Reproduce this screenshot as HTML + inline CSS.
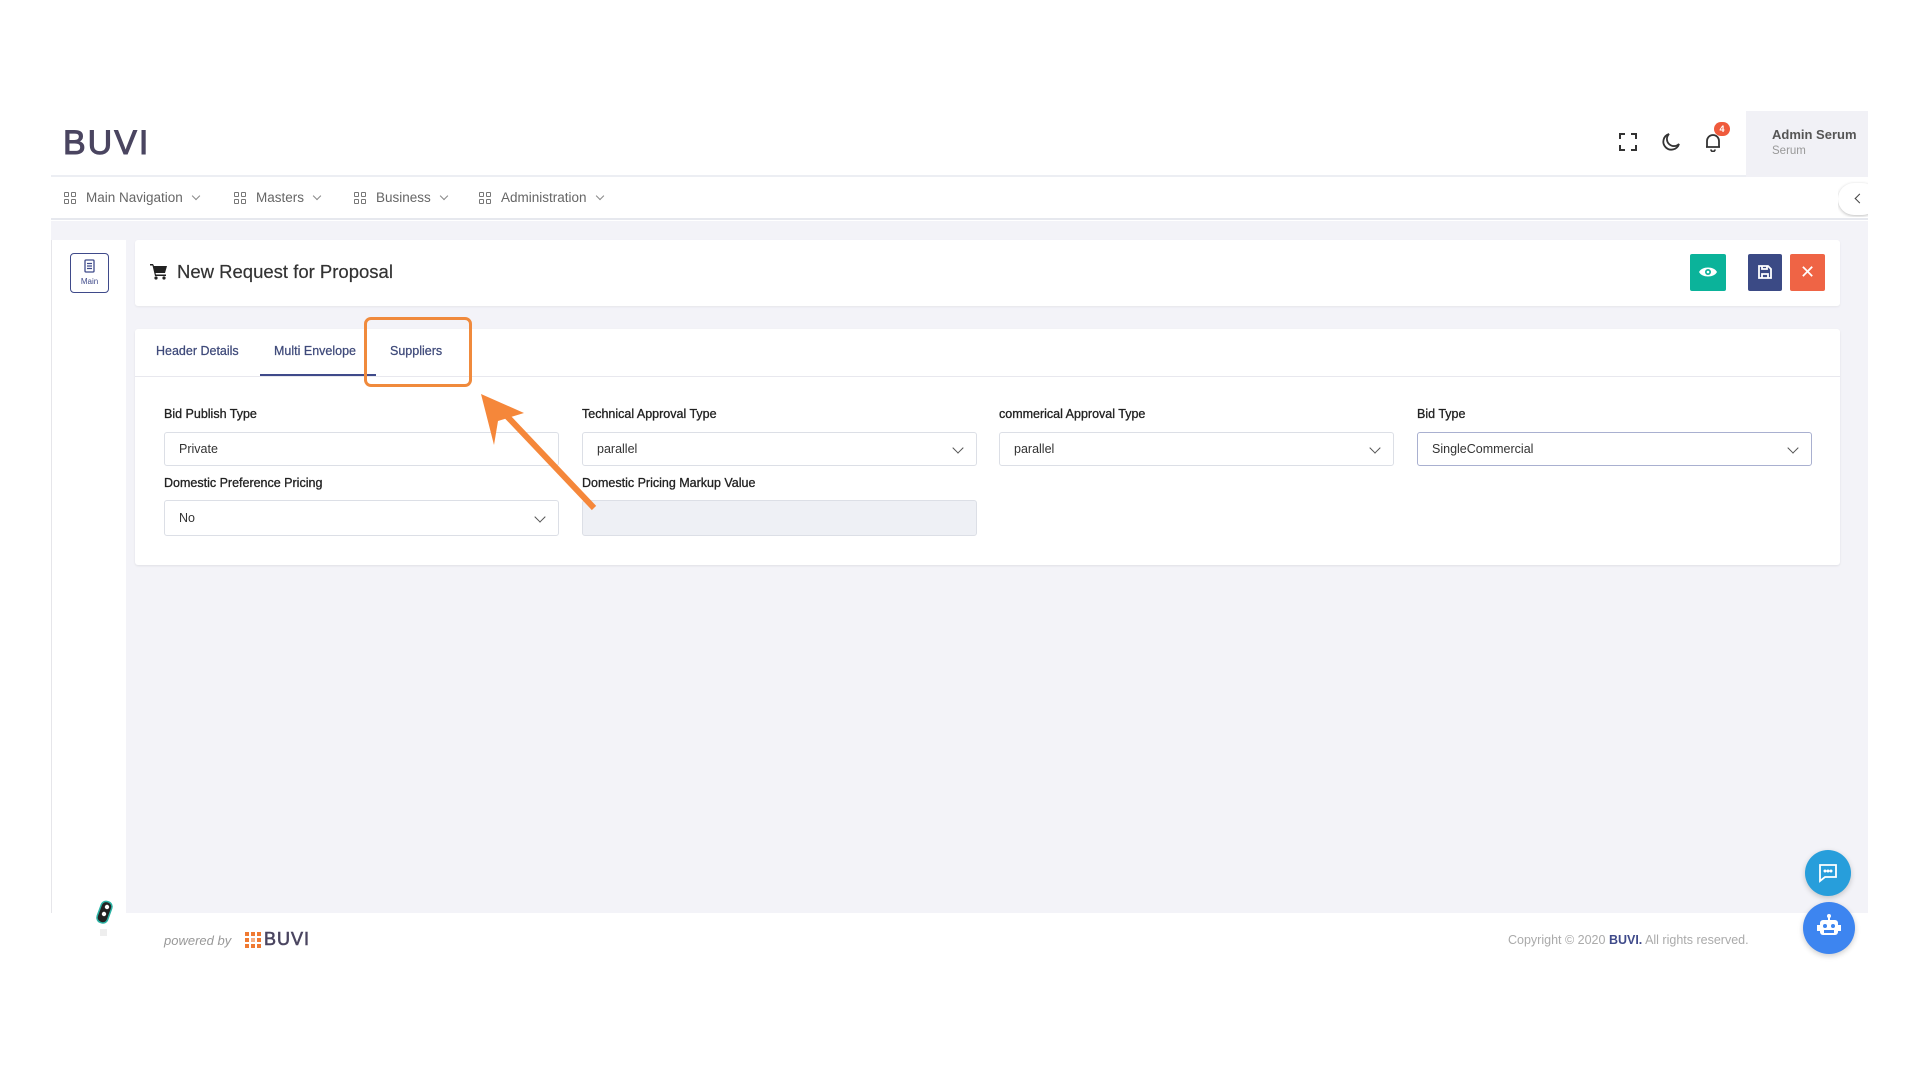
<!DOCTYPE html>
<html><head><meta charset="utf-8">
<style>
*{box-sizing:border-box;margin:0;padding:0}
body{width:1920px;height:1080px;background:#fff;font-family:"Liberation Sans",sans-serif;position:relative;overflow:hidden;color:#333}
.abs{position:absolute}
.lbl{position:absolute;font-size:12.5px;color:#222;-webkit-text-stroke:0.3px #222}
.inp{position:absolute;height:34px;border:1px solid #dcdfe6;border-radius:3px;background:#fff;font-size:12.5px;color:#333;padding-left:14px;line-height:32px}
.chev{position:absolute;right:14px;top:11px;width:8px;height:8px;border-right:1.3px solid #555;border-bottom:1.3px solid #555;transform:rotate(45deg)}
.nav{position:absolute;top:190px;font-size:13.5px;color:#666;display:flex;align-items:center}
.grid{display:inline-grid;grid-template-columns:5px 5px;gap:2px;margin-right:10px}
.grid i{width:5px;height:5px;border:1px solid #777;border-radius:1px}
.nchev{width:6px;height:6px;border-right:1px solid #888;border-bottom:1px solid #888;transform:rotate(45deg);margin-left:10px;margin-top:-4px}
.tab{position:absolute;top:344px;font-size:12.5px;color:#3f4a7a;-webkit-text-stroke:0.25px #3f4a7a}
</style></head><body>
<!-- header -->
<div class="abs" style="left:51px;top:111px;width:1817px;height:66px;background:#fff;border-bottom:2px solid #eceef3"></div>
<div class="abs" style="left:63px;top:124px;font-size:34px;color:#4a4560;letter-spacing:2px;-webkit-text-stroke:1px #4a4560">BUVI</div>
<svg class="abs" style="left:1619px;top:133px" width="18" height="18" viewBox="0 0 18 18" fill="none" stroke="#333" stroke-width="2"><path d="M1 6V1h5M12 1h5v5M17 12v5h-5M6 17H1v-5"/></svg>
<svg class="abs" style="left:1661px;top:132px" width="20" height="20" viewBox="0 0 20 20" fill="none" stroke="#333" stroke-width="1.8"><path d="M8 2a8 8 0 1 0 10 10A7 7 0 0 1 8 2z"/></svg>
<svg class="abs" style="left:1703px;top:132px" width="20" height="20" viewBox="0 0 20 20" fill="none" stroke="#333" stroke-width="1.8"><path d="M4 15V9a6 6 0 0 1 12 0v6H3h14M8 17.5a2 2 0 0 0 4 0"/></svg>
<div class="abs" style="left:1714px;top:122px;width:16px;height:14px;border-radius:7px;background:#ef5a3c;color:#fff;font-size:9px;font-weight:bold;text-align:center;line-height:14px">4</div>
<div class="abs" style="left:1746px;top:111px;width:122px;height:66px;background:#f1f1f6"></div>
<div class="abs" style="left:1772px;top:127px;font-size:13px;font-weight:bold;color:#555">Admin Serum</div>
<div class="abs" style="left:1772px;top:145px;font-size:11.5px;color:#999">Serum</div>
<!-- nav -->
<div class="abs" style="left:51px;top:178px;width:1817px;height:42px;background:#fff;border-bottom:2px solid #e6e8ee"></div>
<div class="nav" style="left:64px"><span class="grid"><i></i><i></i><i></i><i></i></span>Main Navigation<span class="nchev"></span></div>
<div class="nav" style="left:234px"><span class="grid"><i></i><i></i><i></i><i></i></span>Masters<span class="nchev"></span></div>
<div class="nav" style="left:354px"><span class="grid"><i></i><i></i><i></i><i></i></span>Business<span class="nchev"></span></div>
<div class="nav" style="left:479px"><span class="grid"><i></i><i></i><i></i><i></i></span>Administration<span class="nchev"></span></div>
<div class="abs" style="left:1838px;top:181px;width:30px;height:36px;overflow:hidden"><div style="position:absolute;left:0;top:2px;width:40px;height:32px;border-radius:16px;background:#fff;box-shadow:0 1px 3px rgba(0,0,0,.25)"></div></div>
<div class="abs" style="left:1856px;top:195px;width:7px;height:7px;border-left:1.8px solid #444;border-bottom:1.8px solid #444;transform:rotate(45deg)"></div>
<!-- content bg -->
<div class="abs" style="left:51px;top:221px;width:1817px;height:692px;background:#f3f3f8"></div>
<div class="abs" style="left:51px;top:240px;width:75px;height:673px;background:#fff;border-left:1px solid #e6e6ea"></div>
<div class="abs" style="left:70px;top:253px;width:39px;height:40px;border:1.5px solid #3f4a8a;border-radius:4px;background:#fff"></div>
<svg class="abs" style="left:84px;top:259px" width="11" height="14" viewBox="0 0 11 14" fill="none" stroke="#3f4a8a" stroke-width="1.3"><rect x="1" y="1" width="9" height="12" rx="1"/><path d="M3 4.5h5M3 7h5M3 9.5h5"/></svg>
<div class="abs" style="left:70px;top:277px;width:39px;text-align:center;font-size:8px;color:#3f4a8a">Main</div>
<!-- title card -->
<div class="abs" style="left:135px;top:240px;width:1705px;height:66px;background:#fff;border-radius:3px;box-shadow:0 1px 2px rgba(0,0,0,.06)"></div>
<svg class="abs" style="left:150px;top:263px" width="18" height="17" viewBox="0 0 18 17" fill="#222"><path d="M0 1h3l1 2h13l-2 7H5.5L6 11.5h10V13H5L2.5 2.5H0z"/><circle cx="6" cy="15" r="1.6"/><circle cx="14" cy="15" r="1.6"/></svg>
<div class="abs" style="left:177px;top:261px;font-size:18.5px;color:#333;-webkit-text-stroke:0.2px #333">New Request for Proposal</div>
<div class="abs" style="left:1690px;top:254px;width:36px;height:37px;background:#0bb39a;border-radius:2px"></div>
<svg class="abs" style="left:1698px;top:264px" width="20" height="16" viewBox="0 0 20 16"><path d="M1 8C4 2 16 2 19 8C16 14 4 14 1 8z" fill="#fff"/><circle cx="10" cy="8" r="3" fill="#0bb39a"/><circle cx="10" cy="8" r="1.3" fill="#fff"/></svg>
<div class="abs" style="left:1748px;top:254px;width:34px;height:37px;background:#3b4a85;border-radius:2px"></div>
<svg class="abs" style="left:1758px;top:265px" width="14" height="14" viewBox="0 0 14 14" fill="none" stroke="#fff" stroke-width="1.8"><path d="M1 1h9l3 3v9H1z"/><path d="M4 1v3h5V1M4 13V9h6v4"/></svg>
<div class="abs" style="left:1790px;top:254px;width:35px;height:37px;background:#ef6445;border-radius:2px;color:#fff;font-size:18px;text-align:center;line-height:36px">✕</div>
<!-- tabs card -->
<div class="abs" style="left:135px;top:329px;width:1705px;height:236px;background:#fff;border-radius:3px;box-shadow:0 1px 2px rgba(0,0,0,.08)"></div>
<div class="abs" style="left:135px;top:376px;width:1705px;height:1px;background:#e8e8ee"></div>
<div class="tab" style="left:156px">Header Details</div>
<div class="tab" style="left:274px">Multi Envelope</div>
<div class="tab" style="left:390px">Suppliers</div>
<div class="abs" style="left:260px;top:374px;width:116px;height:2px;background:#3f4a8a"></div>
<div class="abs" style="left:364px;top:317px;width:108px;height:70px;border:3px solid #f08a3c;border-radius:7px"></div>
<!-- form -->
<div class="lbl" style="left:164px;top:407px">Bid Publish Type</div>
<div class="lbl" style="left:582px;top:407px">Technical Approval Type</div>
<div class="lbl" style="left:999px;top:407px">commerical Approval Type</div>
<div class="lbl" style="left:1417px;top:407px">Bid Type</div>
<div class="inp" style="left:164px;top:432px;width:395px">Private</div>
<div class="inp" style="left:582px;top:432px;width:395px">parallel<span class="chev"></span></div>
<div class="inp" style="left:999px;top:432px;width:395px">parallel<span class="chev"></span></div>
<div class="inp" style="left:1417px;top:432px;width:395px;border-color:#a9b0d0">SingleCommercial<span class="chev"></span></div>
<div class="lbl" style="left:164px;top:476px">Domestic Preference Pricing</div>
<div class="lbl" style="left:582px;top:476px">Domestic Pricing Markup Value</div>
<div class="inp" style="left:164px;top:500px;width:395px;height:36px;line-height:34px">No<span class="chev" style="top:12px"></span></div>
<div class="inp" style="left:582px;top:500px;width:395px;height:36px;background:#eef0f5"></div>
<!-- arrow -->
<svg class="abs" style="left:0;top:0" width="1920" height="1080" viewBox="0 0 1920 1080"><path d="M594 508L503 412" stroke="#f5873a" stroke-width="6" fill="none"/><path d="M481 394L524 413L498 421L494 445z" fill="#f5873a"/></svg>
<!-- footer -->
<svg class="abs" style="left:90px;top:899px" width="28" height="38" viewBox="0 0 28 38"><rect x="9" y="2" width="11" height="22" rx="5" transform="rotate(20 14 13)" fill="#222" stroke="#2bb3a5" stroke-width="1.5"/><circle cx="17" cy="8" r="2.2" fill="#fff"/><circle cx="14" cy="15" r="2.2" fill="#fff"/><rect x="10" y="30" width="7" height="7" fill="#eee"/></svg>
<div class="abs" style="left:164px;top:933px;font-size:13px;font-style:italic;color:#999">powered by</div>
<svg class="abs" style="left:245px;top:932px" width="16" height="16" viewBox="0 0 16 16" fill="#f07a32"><rect x="0" y="0" width="4" height="4"/><rect x="6" y="0" width="4" height="4"/><rect x="12" y="0" width="4" height="4"/><rect x="0" y="6" width="4" height="4"/><rect x="12" y="6" width="4" height="4"/><rect x="0" y="12" width="4" height="4"/><rect x="6" y="12" width="4" height="4"/><rect x="12" y="12" width="4" height="4"/><rect x="6" y="6" width="4" height="4" opacity=".6"/></svg>
<div class="abs" style="left:264px;top:929px;font-size:18px;color:#4a4560;letter-spacing:1px;-webkit-text-stroke:0.6px #4a4560">BUVI</div>
<div class="abs" style="left:1508px;top:933px;font-size:12.5px;color:#aaa">Copyright © 2020 <b style="color:#3f4a8a">BUVI.</b> All rights reserved.</div>
<div class="abs" style="left:1805px;top:850px;width:46px;height:46px;border-radius:50%;background:#279edb;box-shadow:0 2px 6px rgba(0,0,0,.2)"></div>
<svg class="abs" style="left:1818px;top:863px" width="20" height="20" viewBox="0 0 20 20" fill="none" stroke="#fff" stroke-width="1.8"><path d="M2 2h16v12H7l-5 4z"/><circle cx="7" cy="8" r=".6" fill="#fff"/><circle cx="10" cy="8" r=".6" fill="#fff"/><circle cx="13" cy="8" r=".6" fill="#fff"/></svg>
<div class="abs" style="left:1803px;top:902px;width:52px;height:52px;border-radius:50%;background:#3d85f0;box-shadow:0 2px 6px rgba(0,0,0,.2)"></div>
<svg class="abs" style="left:1816px;top:914px" width="26" height="26" viewBox="0 0 26 26" fill="#fff"><rect x="12" y="1" width="2" height="5"/><circle cx="13" cy="2" r="2"/><rect x="4" y="6" width="18" height="15" rx="3"/><rect x="1" y="11" width="3" height="6"/><rect x="22" y="11" width="3" height="6"/><circle cx="9" cy="12" r="2" fill="#3d85f0"/><circle cx="17" cy="12" r="2" fill="#3d85f0"/><rect x="8" y="16" width="10" height="3" fill="#3d85f0"/></svg>
</body></html>
